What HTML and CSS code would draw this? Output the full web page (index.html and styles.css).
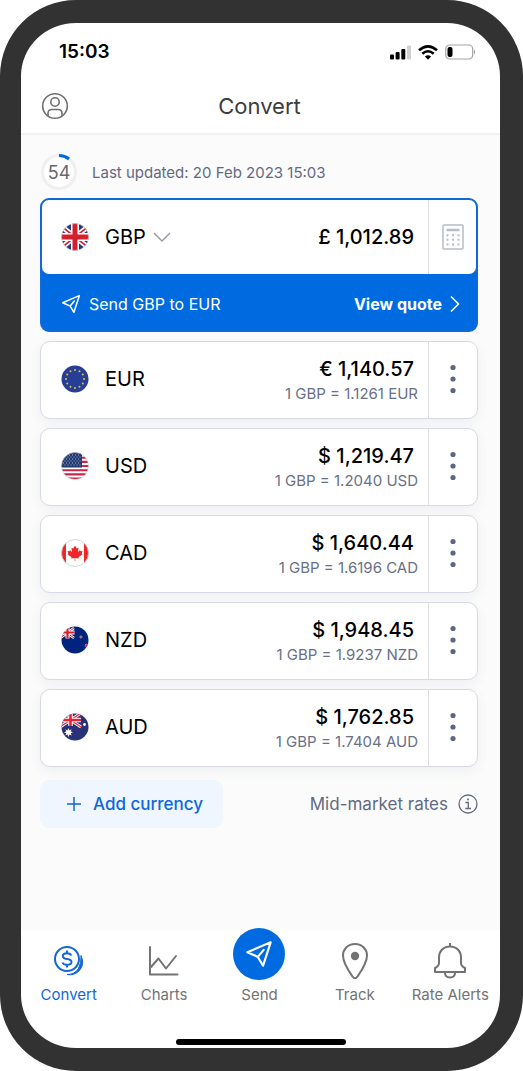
FILE: index.html
```html
<!DOCTYPE html>
<html lang="en">
<head>
<meta charset="utf-8">
<meta name="viewport" content="width=device-width, initial-scale=1">
<title>Convert</title>
<link rel="stylesheet" href="styles.css">
</head>
<body>
<svg class="defs" aria-hidden="true">
  <defs>
    <clipPath id="round"><circle cx="14" cy="14" r="13.500"/></clipPath>
    <symbol id="plane" viewBox="0 0 24 24"><path d="M2 10.500 22 2 15.500 22 11 14.500Z M11 14.500 16 8.500 M2 10.500 8 13 11 14.500" fill="none" stroke="currentColor" stroke-width="1.800" stroke-linejoin="round" stroke-linecap="round"/></symbol>
    <symbol id="dots" viewBox="0 0 6 30"><circle cx="3" cy="3.500" r="2.600"/><circle cx="3" cy="15" r="2.600"/><circle cx="3" cy="26.500" r="2.600"/></symbol>
  </defs>
</svg>
<div class="phone">
  <div class="status">
    <span class="clock">15:03</span>
    <span class="signals">
      <svg width="21" height="15" viewBox="0 0 21 15"><rect x="0" y="9.500" width="4" height="5" rx="1"/><rect x="5.600" y="7" width="4" height="7.500" rx="1"/><rect x="11.300" y="4" width="4" height="10.500" rx="1"/><rect x="17" y="0.500" width="4" height="14" rx="1" fill="#d0d0d0"/></svg>
      <svg width="20" height="15" viewBox="0 0 20 15" fill="none" stroke="#000" stroke-width="2.500"><path d="M1 5.300Q10-2.600 19 5.300"/><path d="M4.300 8.800Q10 3.800 15.700 8.800"/><path d="M6.900 11.600Q10 9 13.100 11.600L10 14.800Z" fill="#000" stroke="none"/></svg>
      <svg width="31" height="16" viewBox="0 0 31 16"><rect x="0.700" y="1" width="27" height="14" rx="4" fill="none" stroke="#a3a3a3" stroke-width="1.200"/><rect x="2.500" y="3" width="5" height="10" rx="2"/><path d="M29 5.500Q31 8 29 10.500Z" fill="#8c8c8c"/></svg>
    </span>
  </div>
  <header class="header">
    <button class="plain profile" aria-label="Profile"><svg width="28" height="28" viewBox="0 0 28 28" fill="none" stroke="#707070" stroke-width="1.600"><circle cx="14" cy="14" r="12.300"/><circle cx="14" cy="10" r="4.200"/><path d="M7 24V21.500Q7 17.500 11 17.500H17Q21 17.500 21 21.500V24"/></svg></button>
    <h1 class="title">Convert</h1>
  </header>
  <main class="content">
    <div class="updated">
      <div class="ring">
        <svg class="ring-art" width="38" height="38" viewBox="0 0 38 38" fill="none" stroke-width="3.200"><circle cx="19" cy="19" r="16.500" fill="#fff" stroke="#f0f0f0"/><path d="M19 2.500A16.500 16.500 0 0 1 29 5.900" stroke="#006be0"/></svg>
        <span class="ring-text">54</span>
      </div>
      <span>Last updated: 20 Feb 2023 15:03</span>
    </div>

    <section class="base">
      <div class="base-card">
        <div class="currency">
          <svg class="flag" viewBox="0 0 28 28"><g clip-path="url(#round)"><path fill="#293b7d" d="M0 0H28V28H0Z"/><path d="M0 3 28 25M28 3 0 25" stroke="#fff" stroke-width="5"/><path d="M0 3 28 25M28 3 0 25" stroke="#d3202f" stroke-width="1.600"/><path d="M14 0V28M0 14H28" stroke="#fff" stroke-width="8"/><path d="M14 0V28M0 14H28" stroke="#d3202f" stroke-width="5"/></g><circle cx="14" cy="14" r="13.500" fill="none" stroke="#ddd" stroke-width=".5"/></svg>
          <select class="picker" aria-label="Base currency"><option>GBP</option></select>
          <svg class="chevron" width="18" height="12" viewBox="0 0 18 12"><path d="M1 2 9 10 17 2" fill="none" stroke="#969caa" stroke-width="1.500"/></svg>
        </div>
        <input class="amount-input" type="text" aria-label="Amount" value="£ 1,012.89">
        <button class="plain side" aria-label="Calculator"><svg width="22" height="26" viewBox="0 0 22 26"><rect x="1" y="1" width="20" height="24" rx="1" fill="none" stroke="#b7bcc6" stroke-width="1.500"/><path d="M4.500 6H17.500" stroke="#b7bcc6" stroke-width="2.500"/><path d="M4.500 11.200H17.500M4.500 15.800H17.500M4.500 20.400H17.500" stroke="#b7bcc6" stroke-width="2" stroke-dasharray="2 3.500"/></svg></button>
      </div>
      <div class="quote">
        <svg width="20" height="20"><use href="#plane"/></svg>
        <span>Send GBP to EUR</span>
        <a class="quote-link" href="#quote">View quote <svg width="10" height="18" viewBox="0 0 10 18"><path d="M1 1.500 8.500 9 1 16.500" fill="none" stroke="#fff" stroke-width="1.500"/></svg></a>
      </div>
    </section>

    <ul class="rates">
      <li class="rate">
        <div class="currency"><svg class="flag" viewBox="0 0 28 28"><circle cx="14" cy="14" r="13.500" fill="#263e95"/><g fill="#e3bd4a"><circle cx="14" cy="5" r="1"/><circle cx="18.500" cy="6.200" r="1"/><circle cx="21.800" cy="9.500" r="1"/><circle cx="23" cy="14" r="1"/><circle cx="21.800" cy="18.500" r="1"/><circle cx="18.500" cy="21.800" r="1"/><circle cx="14" cy="23" r="1"/><circle cx="9.500" cy="21.800" r="1"/><circle cx="6.200" cy="18.500" r="1"/><circle cx="5" cy="14" r="1"/><circle cx="6.200" cy="9.500" r="1"/><circle cx="9.500" cy="6.200" r="1"/></g></svg><span>EUR</span></div>
        <div class="values"><strong class="amount">€ 1,140.57</strong><span class="detail">1 GBP = 1.1261 EUR</span></div>
        <button class="plain side" aria-label="EUR options"><svg width="6" height="30"><use href="#dots"/></svg></button>
      </li>
      <li class="rate">
        <div class="currency"><svg class="flag" viewBox="0 0 28 28"><g clip-path="url(#round)"><path fill="#fff" d="M0 0H28V28H0Z"/><path d="M0 1.500H28M0 5.700H28M0 9.900H28M0 14H28M0 18.200H28M0 22.400H28M0 26.500H28" stroke="#c5284c" stroke-width="2.100"/><path fill="#223a70" d="M0 0H21V15.500H0Z"/><path d="M2 3H20M2 7H20M2 11H20" stroke="#aebbd4" stroke-width="1" stroke-dasharray="1 2"/><path d="M3.500 5H20M3.500 9H20M3.500 13H20" stroke="#aebbd4" stroke-width="1" stroke-dasharray="1 2"/></g><circle cx="14" cy="14" r="13.500" fill="none" stroke="#ccc" stroke-width=".6"/></svg><span>USD</span></div>
        <div class="values"><strong class="amount">$ 1,219.47</strong><span class="detail">1 GBP = 1.2040 USD</span></div>
        <button class="plain side" aria-label="USD options"><svg width="6" height="30"><use href="#dots"/></svg></button>
      </li>
      <li class="rate">
        <div class="currency"><svg class="flag" viewBox="0 0 28 28"><g clip-path="url(#round)"><path fill="#fff" d="M0 0H28V28H0Z"/><path fill="#ee2728" d="M0 0H5V28H0ZM23 0H28V28H23ZM14 6.500 15.700 9.500 17.500 8.700 17 13 19 11 19.500 12.300 21.500 12 20.700 14.500 21.500 15.200 17.500 18.200 17.900 19.500 14.300 19V22H13.700V19L10.100 19.500 10.500 18.200 6.500 15.200 7.300 14.500 6.500 12 8.500 12.300 9 11 11 13 10.500 8.700 12.300 9.500Z"/></g><circle cx="14" cy="14" r="13.500" fill="none" stroke="#ccc" stroke-width=".8"/></svg><span>CAD</span></div>
        <div class="values"><strong class="amount">$ 1,640.44</strong><span class="detail">1 GBP = 1.6196 CAD</span></div>
        <button class="plain side" aria-label="CAD options"><svg width="6" height="30"><use href="#dots"/></svg></button>
      </li>
      <li class="rate">
        <div class="currency"><svg class="flag" viewBox="0 0 28 28"><g clip-path="url(#round)"><path fill="#00247d" d="M0 0H28V28H0Z"/><path d="M-1 2 13 12M13 2-1 12" stroke="#fff" stroke-width="2.600"/><path d="M-1 2 13 12M13 2-1 12" stroke="#d3202f" stroke-width="1"/><path d="M6.500 0V12.500M0 6.500H13.500" stroke="#fff" stroke-width="4"/><path d="M6.500 0V12.500M0 6.500H13.500" stroke="#d3202f" stroke-width="2.200"/><circle cx="20" cy="11" r="1.200" fill="#d3202f" stroke="#ddd" stroke-width=".4"/><circle cx="25.500" cy="19.500" r="1.400" fill="#d3202f" stroke="#ddd" stroke-width=".4"/></g></svg><span>NZD</span></div>
        <div class="values"><strong class="amount">$ 1,948.45</strong><span class="detail">1 GBP = 1.9237 NZD</span></div>
        <button class="plain side" aria-label="NZD options"><svg width="6" height="30"><use href="#dots"/></svg></button>
      </li>
      <li class="rate">
        <div class="currency"><svg class="flag" viewBox="0 0 28 28"><g clip-path="url(#round)"><path fill="#293278" d="M0 0H28V28H0Z"/><path d="M-1 0 20 14M20 0-1 14" stroke="#fff" stroke-width="3"/><path d="M-1 0 20 14M20 0-1 14" stroke="#ec2030" stroke-width="1.300"/><path d="M9.500 0V13M0 7H20" stroke="#fff" stroke-width="4.500"/><path d="M9.500 0V13M0 7H20" stroke="#ec2030" stroke-width="2.600"/><path fill="#fff" d="M7.500 15 8.400 17.400 10.600 16.300 9.600 18.500 12 19.300 9.700 20.300 10.600 22.500 8.400 21.600 7.500 24 6.600 21.600 4.400 22.500 5.300 20.300 3 19.300 5.400 18.500 4.400 16.300 6.600 17.400Z"/><circle cx="23.500" cy="11.500" r="1.400" fill="#fff"/></g></svg><span>AUD</span></div>
        <div class="values"><strong class="amount">$ 1,762.85</strong><span class="detail">1 GBP = 1.7404 AUD</span></div>
        <button class="plain side" aria-label="AUD options"><svg width="6" height="30"><use href="#dots"/></svg></button>
      </li>
    </ul>

    <div class="actions">
      <button class="plain add"><svg width="16" height="16" viewBox="0 0 16 16"><path d="M8 1V15M1 8H15" stroke="currentColor" stroke-width="1.500"/></svg>Add currency</button>
      <a class="market" href="#rates">Mid-market rates <svg width="20" height="20" viewBox="0 0 20 20" fill="none" stroke="currentColor" stroke-width="1.300"><circle cx="10" cy="10" r="9"/><path d="M7.500 8.500H10.300V14.500M7.300 14.500H13"/><circle cx="10" cy="5.500" r="1" fill="currentColor" stroke="none"/></svg></a>
    </div>
  </main>
  <nav class="tabs">
    <a class="tab active" href="#convert"><span class="icon"><svg width="32" height="32" viewBox="0 0 32 32" fill="none" stroke="currentColor" stroke-width="2"><circle cx="14" cy="14" r="12"/><path d="M18.300 10.500Q17.500 8.200 14 8.200 9.800 8.200 9.800 11 9.800 13.500 14 14 18.500 14.500 18.500 17 18.500 19.800 14 19.800 10.200 19.800 9.400 17.500M14 5.500V8.200M14 19.800V22.500"/><path d="M28 10.500Q32 19 26.500 25.500 21 31 14 29.500 22 29.500 25.500 23.500 28.500 17.500 28 10.500Z" fill="currentColor" stroke-width="1"/></svg></span><span>Convert</span></a>
    <a class="tab" href="#charts"><span class="icon"><svg width="32" height="32" viewBox="0 0 32 32" fill="none" stroke="currentColor" stroke-width="2" stroke-linecap="round" stroke-linejoin="round"><path d="M2 2V29.500H29.500M3 22 10.500 13.500 18 23.500 28 11"/></svg></span><span>Charts</span></a>
    <a class="tab" href="#send"><span class="bubble"><svg width="28" height="28"><use href="#plane"/></svg></span><span>Send</span></a>
    <a class="tab" href="#track"><span class="icon"><svg width="28" height="38" viewBox="0 0 28 38"><path d="M14 2C6.500 2 2 7.500 2 13.500 2 21 8 29.500 11.500 34.500Q14 38 16.500 34.500C20 29.500 26 21 26 13.500 26 7.500 21.500 2 14 2Z" fill="none" stroke="currentColor" stroke-width="2"/><circle cx="14" cy="14" r="4.200" fill="currentColor"/></svg></span><span>Track</span></a>
    <a class="tab" href="#alerts"><span class="icon"><svg width="34" height="36" viewBox="0 0 34 36" fill="none" stroke="currentColor" stroke-width="2" stroke-linejoin="round"><path d="M17 0V4M17 3.500C10 3.500 6 8.500 6 14.500V20Q6 23 2 25V29H32V25Q28 23 28 20V14.500C28 8.500 24 3.500 17 3.500ZM11.800 29Q12 34.500 17 34.500 22 34.500 22.200 29"/></svg></span><span>Rate Alerts</span></a>
  </nav>
  <div class="home"></div>
</div>
</body>
</html>
```

FILE: styles.css
```css
* { box-sizing: border-box; }
body {
  margin: 0;
  background: #fff;
  color: #000;
  font-family: Inter, "Liberation Sans", sans-serif;
}
svg { display: block; flex: none; }
.defs { position: absolute; width: 0; height: 0; }
.plain { border: 0; padding: 0; background: none; font: inherit; color: inherit; cursor: pointer; }
a { color: inherit; text-decoration: none; }

.phone {
  display: flex;
  flex-direction: column;
  min-height: 100vh;
  border: solid #323232;
  border-width: 23px 23px 23px 21px;
  border-radius: 76px;
  background: #fff;
}
.status {
  display: flex;
  justify-content: space-between;
  align-items: center;
  padding: 17px 24px 15px 38px;
}
.clock { font-size: 19px; line-height: 24px; font-weight: 600; }
.signals { display: flex; align-items: center; gap: 7px; }

.header {
  display: grid;
  grid-template-columns: 28px 1fr 28px;
  align-items: center;
  padding: 12px 22px 12px 20px;
  border-bottom: 2px solid #f1f1f1;
}
.title {
  margin: 0;
  font-size: 22px;
  line-height: 30px;
  font-weight: 400;
  color: #3c3c3c;
  text-align: center;
}

.content { flex: 1; padding: 18px 22px 20px 19px; background: #fbfbfb; }
.updated {
  display: flex;
  align-items: center;
  gap: 14px;
  margin-bottom: 7px;
  font-size: 15px;
  color: #626a82;
}
.ring { display: grid; place-items: center; }
.ring-art, .ring-text { grid-area: 1 / 1; }
.ring-text { font-size: 18px; color: #696969; }

.base {
  margin-bottom: 9px;
  border: 2px solid #1268d6;
  border-radius: 9px;
  background: #006be0;
}
.base-card { display: flex; height: 74px; border-radius: 7px; background: #fff; }
.currency {
  display: flex;
  flex: 1;
  align-items: center;
  padding-left: 20px;
  font-size: 20px;
}
.base-card .currency { padding-left: 19px; }
.flag { width: 28px; height: 28px; margin-right: 16px; }
.picker {
  appearance: none;
  margin: 0;
  padding: 0;
  border: 0;
  background: none;
  font: inherit;
  color: #000;
}
.chevron { margin-left: 7px; pointer-events: none; }
.amount-input {
  width: 140px;
  padding: 0 14px 0 0;
  border: 0;
  background: none;
  font: 500 20px Inter, "Liberation Sans", sans-serif;
  color: #000;
  text-align: right;
}
.side {
  display: grid;
  place-items: center;
  width: 49px;
  border-left: 1px solid #dcdee2;
  fill: #5d6682;
}
.base-card .side { width: 48px; }
.quote {
  display: flex;
  align-items: center;
  gap: 8px;
  height: 56px;
  padding: 4px 16px 0 19px;
  font-size: 16px;
  color: #fff;
}
.quote-link { display: flex; align-items: center; gap: 8px; margin-left: auto; font-weight: 700; }

.rates {
  display: grid;
  gap: 9px;
  margin: 0;
  padding: 0;
  list-style: none;
}
.rate {
  display: flex;
  height: 78px;
  border: 1px solid #d7dae1;
  border-radius: 10px;
  background: #fff;
  box-shadow: 0 4px 12px rgba(70, 80, 130, 0.07);
}
.rate .currency { padding-bottom: 2px; }
.rate .side { padding-bottom: 2px; }
.values {
  display: flex;
  flex-direction: column;
  justify-content: center;
  align-items: flex-end;
  padding: 2px 10px 0 0;
}
.amount { padding-right: 4px; font-size: 20px; line-height: 26px; font-weight: 500; }
.detail { font-size: 15px; line-height: 24px; color: #697087; }

.actions {
  display: flex;
  justify-content: space-between;
  align-items: center;
  margin-top: 13px;
}
.add {
  display: flex;
  align-items: center;
  gap: 11px;
  height: 48px;
  padding: 0 20px 0 26px;
  border-radius: 9px;
  background: #eff6ff;
  font-size: 17px;
  font-weight: 500;
  color: #0d68d8;
}
.market { display: flex; align-items: center; gap: 10px; font-size: 17px; color: #626a82; }

.tabs {
  display: grid;
  grid-template-columns: repeat(5, 1fr);
  height: 76px;
  padding-right: 2px;
}
.tab {
  display: flex;
  flex-direction: column;
  justify-content: space-between;
  align-items: center;
  font-size: 15px;
  line-height: 22px;
  color: #737373;
  white-space: nowrap;
}
.tab.active { color: #1268d6; }
.icon {
  display: grid;
  place-items: center;
  height: 54px;
  padding-top: 8px;
}
.bubble {
  display: grid;
  place-items: center;
  width: 52px;
  height: 52px;
  margin-top: -2px;
  border-radius: 50%;
  background: #006be0;
  color: #fff;
}
.home {
  width: 170px;
  height: 6px;
  margin: 33px auto 3px;
  border-radius: 3px;
  background: #000;
}
```
